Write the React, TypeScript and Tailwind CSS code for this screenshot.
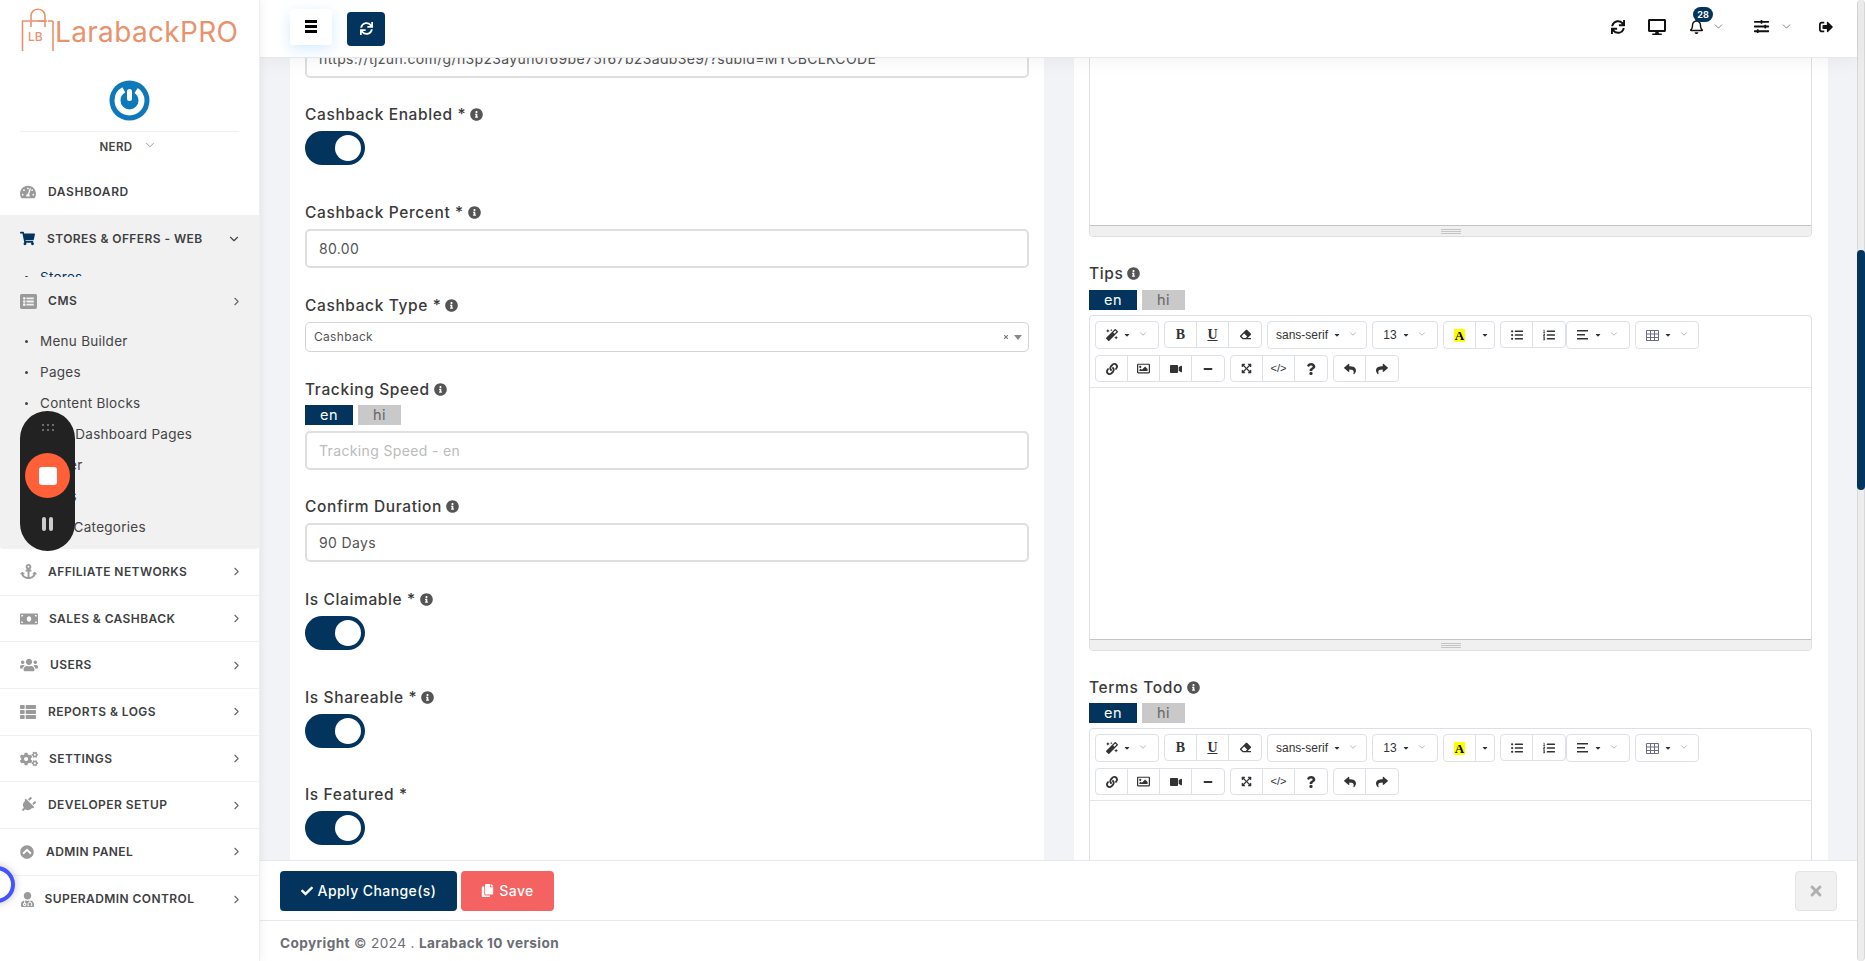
import { ChevronDown, ChevronRight } from 'lucide-react'
import type { ReactNode } from 'react'
import {
  FaAnchor,
  FaCaretDown,
  FaCheck,
  FaChevronCircleUp,
  FaCogs,
  FaCopy,
  FaDesktop,
  FaEraser,
  FaExpandArrowsAlt,
  FaInfoCircle,
  FaLink,
  FaListAlt,
  FaListOl,
  FaListUl,
  FaMagic,
  FaMinus,
  FaMoneyBill,
  FaPlug,
  FaQuestion,
  FaRegBell,
  FaRegImage,
  FaReply,
  FaShare,
  FaShoppingCart,
  FaSignOutAlt,
  FaSlidersH,
  FaSync,
  FaTachometerAlt,
  FaThList,
  FaTimes,
  FaUserMd,
  FaUsers,
  FaVideo,
} from 'react-icons/fa'

const cmsLinks = ['Menu Builder', 'Pages', 'Content Blocks', 'User Dashboard Pages', 'Footer', 'Blogs', 'Blog Categories']

const menuItems = [
  { label: 'Affiliate Networks', icon: <FaAnchor size={17} />, box: 'w-[28px]' },
  { label: 'Sales & Cashback', icon: <FaMoneyBill size={18} />, box: 'w-[29px]' },
  { label: 'Users', icon: <FaUsers size={18} />, box: 'w-[30px]' },
  { label: 'Reports & Logs', icon: <FaThList size={16} />, box: 'w-[28px]' },
  { label: 'Settings', icon: <FaCogs size={18} />, box: 'w-[29px]' },
  { label: 'Developer Setup', icon: <FaPlug size={16} className="rotate-45" />, box: 'w-[28px]' },
  { label: 'Admin Panel', icon: <FaChevronCircleUp size={14} />, box: 'w-[26px]' },
  { label: 'Superadmin Control', icon: <FaUserMd size={15} />, box: 'w-[24.5px]' },
]

function Logo() {
  return (
    <div className="flex h-[65px] items-start pl-[21px] pt-[8px]">
      <svg width="34" height="44" viewBox="0 0 34 44" fill="none" stroke="#e8936e" strokeWidth="1.6">
        <path d="M1.5 43V13H9M17 13h9M32 13v30" />
        <path d="M10 19V8c0-9 14-9 14 0v11" />
        <path d="M10 13h14" />
        <path d="M32 13h-5" />
        <text x="7" y="33" fontSize="12" fontFamily="Inter, sans-serif" fontWeight="500" fill="#e8936e" stroke="none">
          LB
        </text>
      </svg>
      <span className="mt-[4px] text-[28px] leading-[40px] font-normal tracking-[0.012em] text-[#e8936e]">LarabackPRO</span>
    </div>
  )
}

function Sidebar() {
  return (
    <aside className="relative z-20 h-full w-[260px] shrink-0 border-r border-[#eeeeee] bg-white shadow-[2px_0_8px_rgba(0,0,0,0.05)]">
      <Logo />

      {/* user */}
      <div className="mx-[20px] flex h-[67px] items-start justify-center border-b border-[#efefef] pt-[15px]">
        <svg width="41" height="41" viewBox="0 0 41 41">
          <circle cx="20.5" cy="20.5" r="20" fill="#0d79bb" />
          <circle cx="20.5" cy="20.5" r="12" fill="none" stroke="#ffffff" strokeWidth="6" strokeDasharray="62 14" strokeDashoffset="-7" transform="rotate(-90 20.5 20.5)" />
          <rect x="18" y="9" width="5" height="12" rx="2.5" fill="#ffffff" />
        </svg>
      </div>
      <div className="flex h-[30px] items-center justify-center pt-px pr-[2px] text-[11.5px] font-semibold tracking-[0.03em] text-[#444444]">
        NERD
        <ChevronDown size={14} strokeWidth={1} className="mt-[-5px] ml-[11px] text-[#555555]" />
      </div>

      <nav className="mt-[7px]">
        <div className="flex h-[46px] items-center pl-[20px] text-[#9a9a9a]">
          <span className="w-[28px]">
            <FaTachometerAlt size={16} />
          </span>
          <span className="text-[12px] font-semibold tracking-[0.05em] text-[#3e3f42] uppercase">Dashboard</span>
        </div>

        {/* stores block, the next block sits right over its sub items */}
        <div className="h-[62px] overflow-hidden bg-[#f1f1f2]">
          <div className="flex h-[47px] items-center justify-between pr-[18px] pl-[20px] text-[#02345e]">
            <div className="flex items-center">
              <span className="w-[27px]">
                <FaShoppingCart size={15} />
              </span>
              <span className="text-[12px] font-semibold tracking-[0.035em] text-[#3e3f42] uppercase">Stores &amp; Offers - Web</span>
            </div>
            <ChevronDown size={14} className="text-[#444444]" />
          </div>
          <div className="flex h-[31px] items-center pl-[25px] text-[13.5px] tracking-[0.02em] text-[#02345e]">
            <span className="mr-[12px] h-[3px] w-[3px] rounded-full bg-[#02345e]" />
            Stores
          </div>
        </div>

        <div className="h-[272px] rounded-b-[3px] bg-[#f1f1f2]">
          <div className="flex h-[48px] items-center justify-between pr-[16px] pl-[20px] text-[#9a9a9a]">
            <div className="flex items-center">
              <span className="w-[28px]">
                <FaListAlt size={17} />
              </span>
              <span className="text-[12px] font-semibold tracking-[0.05em] text-[#3e3f42] uppercase">CMS</span>
            </div>
            <ChevronRight size={13} className="text-[#666666]" />
          </div>
          {cmsLinks.map(link => (
            <div key={link} className="flex h-[31px] items-center pt-[2px] pl-[25px] text-[13.5px] tracking-[0.02em] text-[#444444]">
              <span className="mr-[12px] h-[3px] w-[3px] rounded-full bg-[#444444]" />
              {link}
            </div>
          ))}
        </div>

        {menuItems.map(item => (
          <div key={item.label} className="flex h-[46.7px] items-center justify-between border-b border-[#f0f0f0] pr-[16px] pl-[20px] text-[#9a9a9a] last:border-b-0">
            <div className="flex items-center">
              <span className={item.box}>{item.icon}</span>
              <span className="text-[12px] font-semibold tracking-[0.035em] text-[#3e3f42] uppercase">{item.label}</span>
            </div>
            <ChevronRight size={13} className="text-[#666666]" />
          </div>
        ))}
      </nav>

      {/* screen recorder widget floating over the page */}
      <div className="absolute top-[411px] left-[20px] z-30 flex h-[140px] w-[55px] flex-col items-center rounded-full bg-[#222222]">
        <div className="mt-[13px] grid grid-cols-3 gap-x-[3px] gap-y-[3px]">
          {[1, 2, 3, 4, 5, 6].map(dot => (
            <span key={dot} className="h-[2px] w-[2px] bg-[#6b6b78]" />
          ))}
        </div>
        <div className="mt-[22px] flex h-[45px] w-[45px] items-center justify-center rounded-full bg-[#ff6038]">
          <span className="h-[18px] w-[18px] rounded-[3px] bg-white" />
        </div>
        <div className="mt-[19px] flex gap-[3px]">
          <span className="h-[14px] w-[4px] rounded-full bg-[#cccccc]" />
          <span className="h-[14px] w-[4px] rounded-full bg-[#cccccc]" />
        </div>
      </div>
      <div className="absolute top-[866px] left-[-22px] z-30 h-[37px] w-[37px] rounded-full border-4 border-[#4353ff] bg-white shadow-[0_0_8px_rgba(0,0,0,0.25)]" />
    </aside>
  )
}

function TopBar() {
  return (
    <header className="relative z-10 flex h-[58px] shrink-0 items-center justify-between border-b border-[#e8e8e8] bg-white pr-[24px] pl-[30px] shadow-[0_3px_18px_rgba(0,0,0,0.05)]">
      <div className="flex items-center">
        <button className="mt-[-4px] flex h-[36px] w-[42px] items-center justify-center rounded-[3px] bg-white shadow-[0_4px_14px_rgba(120,190,255,0.3)]">
          <span className="flex flex-col gap-[2.5px]">
            <span className="h-[2.5px] w-[12px] bg-black" />
            <span className="h-[2.5px] w-[12px] bg-black" />
            <span className="h-[2.5px] w-[12px] bg-black" />
          </span>
        </button>
        <button className="ml-[15px] flex h-[34px] w-[38px] items-center justify-center rounded-[4px] bg-[#02345e] text-white">
          <FaSync size={13} />
        </button>
      </div>
      <div className="mt-[-4px] flex items-center text-[#111111]">
        <FaSync size={14} />
        <FaDesktop size={18} className="ml-[23px]" />
        <div className="relative ml-[23px]">
          <FaRegBell size={15} />
          <span className="absolute top-[-12px] left-[4px] flex h-[15px] w-[20px] items-center justify-center rounded-full bg-[#02345e] text-[9px] font-bold text-white">28</span>
        </div>
        <ChevronDown size={13} strokeWidth={1.25} className="ml-[8px] text-[#444444]" />
        <FaSlidersH size={15} className="ml-[29px]" />
        <ChevronDown size={13} strokeWidth={1.25} className="ml-[11px] text-[#444444]" />
        <FaSignOutAlt size={14} className="ml-[26px]" />
      </div>
    </header>
  )
}

function FieldLabel({ text, info = true }: { text: string; info?: boolean }) {
  return (
    <div className="flex h-5 items-center gap-[4px] pt-px text-[15.5px] leading-5 font-medium tracking-[0.04em] text-[#3a3a3a]">
      {text}
      {info && <FaInfoCircle size={13} className="text-[#555555]" />}
    </div>
  )
}

function TextBox({ value, placeholder }: { value?: string; placeholder?: string }) {
  return (
    <div className="flex h-[39px] items-center truncate rounded-[5px] border-2 border-[#dfdfdf] bg-white pl-[12px] text-[14px] tracking-[0.025em] text-[#555555]">
      {value ?? <span className="text-[#bbbbbb]">{placeholder}</span>}
    </div>
  )
}

function Toggle() {
  return (
    <div className="flex h-[34px] w-[60px] items-center justify-end rounded-full bg-[#02345e] pr-[4px]">
      <span className="h-[26px] w-[26px] rounded-full bg-white" />
    </div>
  )
}

function LangTabs() {
  return (
    <div className="flex gap-[5px] text-[14.5px] leading-5 tracking-[0.03em]">
      <span className="w-[48px] bg-[#02345e] text-center text-white">en</span>
      <span className="w-[43px] bg-[#c9c9c9] text-center text-[#666666]">hi</span>
    </div>
  )
}

function FormColumn() {
  return (
    <section className="mt-[-19px] bg-white pr-[15px] pl-[15px]">
      <TextBox value="https://tjzun.com/g/n3p23ayun0f69be75f67b23adb3e9/?subid=MYCBCLKCODE" />

      <div className="mt-[26px]">
        <FieldLabel text="Cashback Enabled *" />
        <div className="mt-[7px]">
          <Toggle />
        </div>
      </div>

      <div className="mt-[37px]">
        <FieldLabel text="Cashback Percent *" />
        <div className="mt-[7px]">
          <TextBox value="80.00" />
        </div>
      </div>

      <div className="mt-[27px]">
        <FieldLabel text="Cashback Type *" />
        <div className="mt-[7px] flex h-[30px] items-center justify-between rounded-[5px] border border-[#d4d4d4] pr-[6px] pl-[8px] text-[12px] tracking-[0.025em] text-[#555555]">
          Cashback
          <span className="flex items-center gap-[5px] text-[#777777]">
            <FaTimes size={6} />
            <span className="h-0 w-0 border-x-[4px] border-t-[5px] border-x-transparent border-t-[#888888]" />
          </span>
        </div>
      </div>

      <div className="mt-[27px]">
        <FieldLabel text="Tracking Speed" />
        <div className="mt-[6px]">
          <LangTabs />
        </div>
        <div className="mt-[6px]">
          <TextBox placeholder="Tracking Speed - en" />
        </div>
      </div>

      <div className="mt-[26px]">
        <FieldLabel text="Confirm Duration" />
        <div className="mt-[7px]">
          <TextBox value="90 Days" />
        </div>
      </div>

      <div className="mt-[27px]">
        <FieldLabel text="Is Claimable *" />
        <div className="mt-[7px]">
          <Toggle />
        </div>
      </div>

      <div className="mt-[37px]">
        <FieldLabel text="Is Shareable *" />
        <div className="mt-[7px]">
          <Toggle />
        </div>
      </div>

      <div className="mt-[36px]">
        <FieldLabel text="Is Featured *" info={false} />
        <div className="mt-[7px]">
          <Toggle />
        </div>
      </div>
    </section>
  )
}

function ToolBtn({ children }: { children: ReactNode }) {
  return <span className="flex h-full w-[32px] items-center justify-center border-r border-[#dde1e6] last:border-r-0">{children}</span>
}

function ToolGroup({ children }: { children: ReactNode }) {
  return <div className="flex h-[27px] items-center rounded-[4px] border border-[#dde1e6] bg-white text-[#333333]">{children}</div>
}

function DropBtn({ className, children }: { className: string; children: ReactNode }) {
  return (
    <div className={`flex h-[28px] items-center justify-center gap-[5px] rounded-[4px] border border-[#dde1e6] bg-white font-['Liberation_Sans',sans-serif] text-[12px] text-[#333333] ${className}`}>
      {children}
      <FaCaretDown size={8} />
      <ChevronDown size={10} strokeWidth={1} className="mt-[-3px] ml-[2px] text-[#555555]" />
    </div>
  )
}

function TableIcon() {
  return (
    <svg width="13" height="11" viewBox="0 0 13 11" fill="none" stroke="#6b6b8a" strokeWidth="1">
      <path d="M.5.5h12v10H.5zM.5 4h12M.5 7.5h12M4.5.5v10M8.5.5v10" />
    </svg>
  )
}

function AlignIcon() {
  return (
    <svg width="12" height="10" viewBox="0 0 12 10" fill="#333333">
      <path d="M0 0h11v1.6H0zM0 4h8v1.6H0zM0 8h11v1.6H0z" />
    </svg>
  )
}

function Editor({ className }: { className: string }) {
  return (
    <div className={`rounded-[4px] border border-[#dcdfe3] bg-white ${className}`}>
      <div className="h-[72px] border-b border-[#e3e5e8] pt-[5px] pl-[5px]">
        <div className="flex items-start gap-[5px]">
          <DropBtn className="w-[64px]">
            <FaMagic size={12} />
          </DropBtn>
          <ToolGroup>
            <ToolBtn>
              <span className="font-['Liberation_Serif',serif] text-[14px] font-bold">B</span>
            </ToolBtn>
            <ToolBtn>
              <span className="font-['Liberation_Serif',serif] text-[14px] font-bold underline">U</span>
            </ToolBtn>
            <ToolBtn>
              <FaEraser size={11} />
            </ToolBtn>
          </ToolGroup>
          <DropBtn className="w-[100px]">sans-serif</DropBtn>
          <DropBtn className="w-[66px]">13</DropBtn>
          <div className="flex h-[28px] items-center rounded-[4px] border border-[#dde1e6]">
            <span className="flex h-full w-[32px] items-center justify-center border-r border-[#dde1e6]">
              <span className="bg-[#ffff00] px-[1px] font-['Liberation_Serif',serif] text-[13px] leading-[13px] font-bold text-black">A</span>
            </span>
            <span className="flex w-[18px] justify-center text-[#333333]">
              <FaCaretDown size={8} />
            </span>
          </div>
          <ToolGroup>
            <ToolBtn>
              <FaListUl size={12} />
            </ToolBtn>
            <ToolBtn>
              <FaListOl size={12} />
            </ToolBtn>
          </ToolGroup>
          <DropBtn className="ml-[-5px] w-[64px]">
            <AlignIcon />
          </DropBtn>
          <DropBtn className="w-[64px]">
            <TableIcon />
          </DropBtn>
        </div>
        <div className="mt-[6px] flex items-center gap-[5px]">
          <ToolGroup>
            <ToolBtn>
              <FaLink size={12} />
            </ToolBtn>
            <ToolBtn>
              <FaRegImage size={13} />
            </ToolBtn>
            <ToolBtn>
              <FaVideo size={12} />
            </ToolBtn>
            <ToolBtn>
              <FaMinus size={10} />
            </ToolBtn>
          </ToolGroup>
          <ToolGroup>
            <ToolBtn>
              <FaExpandArrowsAlt size={11} />
            </ToolBtn>
            <ToolBtn>
              <span className="font-['Liberation_Sans',sans-serif] text-[11px]">&lt;/&gt;</span>
            </ToolBtn>
            <ToolBtn>
              <FaQuestion size={12} />
            </ToolBtn>
          </ToolGroup>
          <ToolGroup>
            <ToolBtn>
              <FaReply size={12} />
            </ToolBtn>
            <ToolBtn>
              <FaShare size={12} />
            </ToolBtn>
          </ToolGroup>
        </div>
      </div>
      <div className="h-[251px]" />
      <div className="flex h-[11px] flex-col items-center justify-center gap-[1px] rounded-b-[4px] border-t border-[#c4c4c4] bg-[#f0f0f0]">
        <span className="h-px w-[20px] bg-[#c4c4c4]" />
        <span className="h-px w-[20px] bg-[#c4c4c4]" />
        <span className="h-px w-[20px] bg-[#c4c4c4]" />
      </div>
    </div>
  )
}

function EditorColumn() {
  return (
    <section className="bg-white pr-[16px] pl-[15px]">
      <Editor className="mt-[-157px]" />
      <div className="mt-[26px]">
        <FieldLabel text="Tips" />
        <div className="mt-[7px]">
          <LangTabs />
        </div>
        <Editor className="mt-[5px]" />
      </div>
      <div className="mt-[26px]">
        <FieldLabel text="Terms Todo" />
        <div className="mt-[6px]">
          <LangTabs />
        </div>
        <Editor className="mt-[5px]" />
      </div>
    </section>
  )
}

export default function App() {
  return (
    <div className="flex h-screen overflow-hidden bg-white font-['Inter',sans-serif]">
      <Sidebar />
      <main className="flex min-w-0 flex-1 flex-col bg-[#f1f3f7]">
        <TopBar />

        <div className="grid min-h-0 flex-1 grid-cols-2 gap-[30px] overflow-hidden pr-[29px] pl-[30px]">
          <FormColumn />
          <EditorColumn />
        </div>

        {/* action bar */}
        <div className="relative z-10 flex h-[61px] shrink-0 items-center justify-between border-y border-[#e6e8ee] bg-white pr-[20px] pl-[20px]">
          <div className="flex gap-[4px]">
            <button className="flex h-[40px] w-[177px] items-center justify-center gap-[5px] rounded-[4px] bg-[#02345e] text-[14px] font-medium tracking-[0.03em] text-white">
              <FaCheck size={12} />
              Apply Change(s)
            </button>
            <button className="flex h-[40px] w-[93px] items-center justify-center gap-[5px] rounded-[4px] bg-[#f46262] text-[14px] font-medium tracking-[0.03em] text-white">
              <FaCopy size={13} />
              Save
            </button>
          </div>
          <button className="flex h-[40px] w-[42px] items-center justify-center rounded-[4px] border border-[#e4e4e4] bg-[#f1f1f1] text-[#b0b0b0]">
            <FaTimes size={16} />
          </button>
        </div>

        <footer className="flex h-[40px] shrink-0 items-center bg-white pt-[4px] pl-[20px] text-[13.6px] tracking-[0.03em] text-[#6b6e73]">
          <span className="font-bold">Copyright</span>
          <span className="ml-[4px]">© 2024 .</span>
          <span className="ml-[4px] font-bold">Laraback 10 version</span>
        </footer>
      </main>

      {/* page scrollbar */}
      <div className="h-full w-[8px] shrink-0 rounded-[4px] border-x border-[#d8d8d8] bg-[#ededed] pt-[250px]">
        <div className="ml-[-1px] h-[240px] w-[8px] rounded-full bg-[#02345e]" />
      </div>
    </div>
  )
}
